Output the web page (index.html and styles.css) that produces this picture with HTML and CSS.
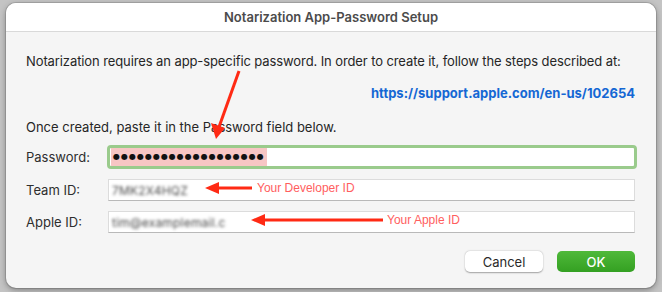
FILE: index.html
```html
<!DOCTYPE html>
<html lang="en">
<head>
    <meta charset="UTF-8">
    <title>Notarization App-Password Setup</title>
    <link rel="stylesheet" href="styles.css">
</head>
<body>
    <div class="window">
        <div class="titlebar">Notarization App-Password Setup</div>
        <div class="content">
            <p class="intro">Notarization requires an app-specific password. In order to create it, follow the steps described at:</p>
            <p class="link-row"><a class="link" href="#">https://support.apple.com/en-us/102654</a></p>
            <p class="hint">Once created, paste it in the Password field below.</p>

            <div class="form">
                <label class="label">Password:</label>
                <div class="field field-focus">
                    <span class="dots">&#9679;&#9679;&#9679;&#9679;&#9679;&#9679;&#9679;&#9679;&#9679;&#9679;&#9679;&#9679;&#9679;&#9679;&#9679;&#9679;&#9679;&#9679;&#9679;</span>
                </div>

                <label class="label">Team ID:</label>
                <div class="field"><span class="blurred">7MK2X4HQZ</span></div>

                <label class="label">Apple ID:</label>
                <div class="field"><span class="blurred">tim@examplemail.c</span></div>
            </div>

            <div class="buttons">
                <button class="btn btn-cancel">Cancel</button>
                <button class="btn btn-ok">OK</button>
            </div>
        </div>

        <!-- red annotations drawn on top of the dialog -->
        <svg class="notes" width="650" height="285" viewBox="0 0 650 285">
            <g stroke="#ff2a14" stroke-width="3" fill="none">
                <line x1="233" y1="68" x2="213" y2="124"/>
                <line x1="209" y1="185" x2="246" y2="185"/>
                <line x1="255" y1="217" x2="377" y2="217"/>
            </g>
            <g fill="#ff2a14">
                <polygon points="210,136 205,120 219,125"/>
                <polygon points="199,185 213,179 213,191"/>
                <polygon points="245,217 259,211 259,223"/>
            </g>
            <text x="251" y="189" class="note-text">Your Developer ID</text>
            <text x="381" y="221" class="note-text">Your Apple ID</text>
        </svg>
    </div>
</body>
</html>
```

FILE: styles.css
```css
body{
    margin: 0;
    width: 662px;
    height: 292px;
    background-color: #c4c4c4;
    font-family: Inter, "Liberation Sans", sans-serif;
    overflow: hidden;
}
.window{
    position: relative;
    margin: 3px 0 0 6px;
    width: 650px;
    height: 285px;
    border-radius: 10px;
    overflow: hidden;
    background-color: #f5f5f5;
    box-shadow: 0 2px 6px rgba(0, 0, 0, 0.35), 0 0 0 1px rgba(0, 0, 0, 0.12);
}
.titlebar{
    height: 28px;
    line-height: 28px;
    background-color: #ffffff;
    border-bottom: 1px solid #d9d9d9;
    text-align: center;
    font-size: 13px;
    font-weight: 600;
    color: #4b4b4b;
}
.content{
    padding: 21px 21px 0 20px;
    font-size: 13px;
    color: #262626;
}
.content p{
    margin: 0;
    line-height: 16px;
}
.intro{
    letter-spacing: -0.1px;
}
.link-row{
    margin-top: 16px !important;
    text-align: right;
}
.link{
    color: #1467d4;
    font-weight: 700;
    text-decoration: none;
}
.hint{
    margin-top: 18px !important;
}
.form{
    margin-top: 10px;
    display: grid;
    grid-template-columns: 82px 1fr;
    row-gap: 10px;
    align-items: center;
}
.label{
    color: #2e2e2e;
}
.field{
    height: 20px;
    background-color: #ffffff;
    border: 1px solid #dcdcdc;
    border-bottom-color: #b9b9b9;
    display: flex;
    align-items: center;
    padding-left: 3px;
}
.field-focus{
    height: 18px;
    margin: 0 -2px 0 -1px;
    border: 3px solid #9acb8c;
    border-radius: 4px;
    padding-left: 1px;
}
.dots{
    background-color: #f7c6c4;
    color: #111;
    font-family: "DejaVu Sans", sans-serif;
    font-size: 8px;
    letter-spacing: 1px;
    height: 18px;
    line-height: 18px;
    padding: 0 2px 0 2px;
}
.blurred{
    display: inline-block;
    color: #4a4a4a;
    font-size: 12px;
    filter: blur(1.4px);
    letter-spacing: 0.2px;
}
.buttons{
    display: flex;
    justify-content: flex-end;
    gap: 14px;
    margin-top: 18px;
}
.btn{
    width: 78px;
    height: 21px;
    border: none;
    border-radius: 5px;
    font-family: Inter, "Liberation Sans", sans-serif;
    font-size: 13px;
    padding: 0;
}
.btn-cancel{
    background-color: #ffffff;
    color: #2a2a2a;
    box-shadow: 0 0.5px 1.5px rgba(0, 0, 0, 0.35);
}
.btn-ok{
    background: linear-gradient(#4fb93a, #34a022);
    color: #ffffff;
    font-weight: 500;
}
.notes{
    position: absolute;
    left: 0;
    top: 0;
    pointer-events: none;
}
.note-text{
    font-family: "Liberation Sans", Arial, sans-serif;
    font-size: 12px;
    fill: #ff5e5e;
}
```
